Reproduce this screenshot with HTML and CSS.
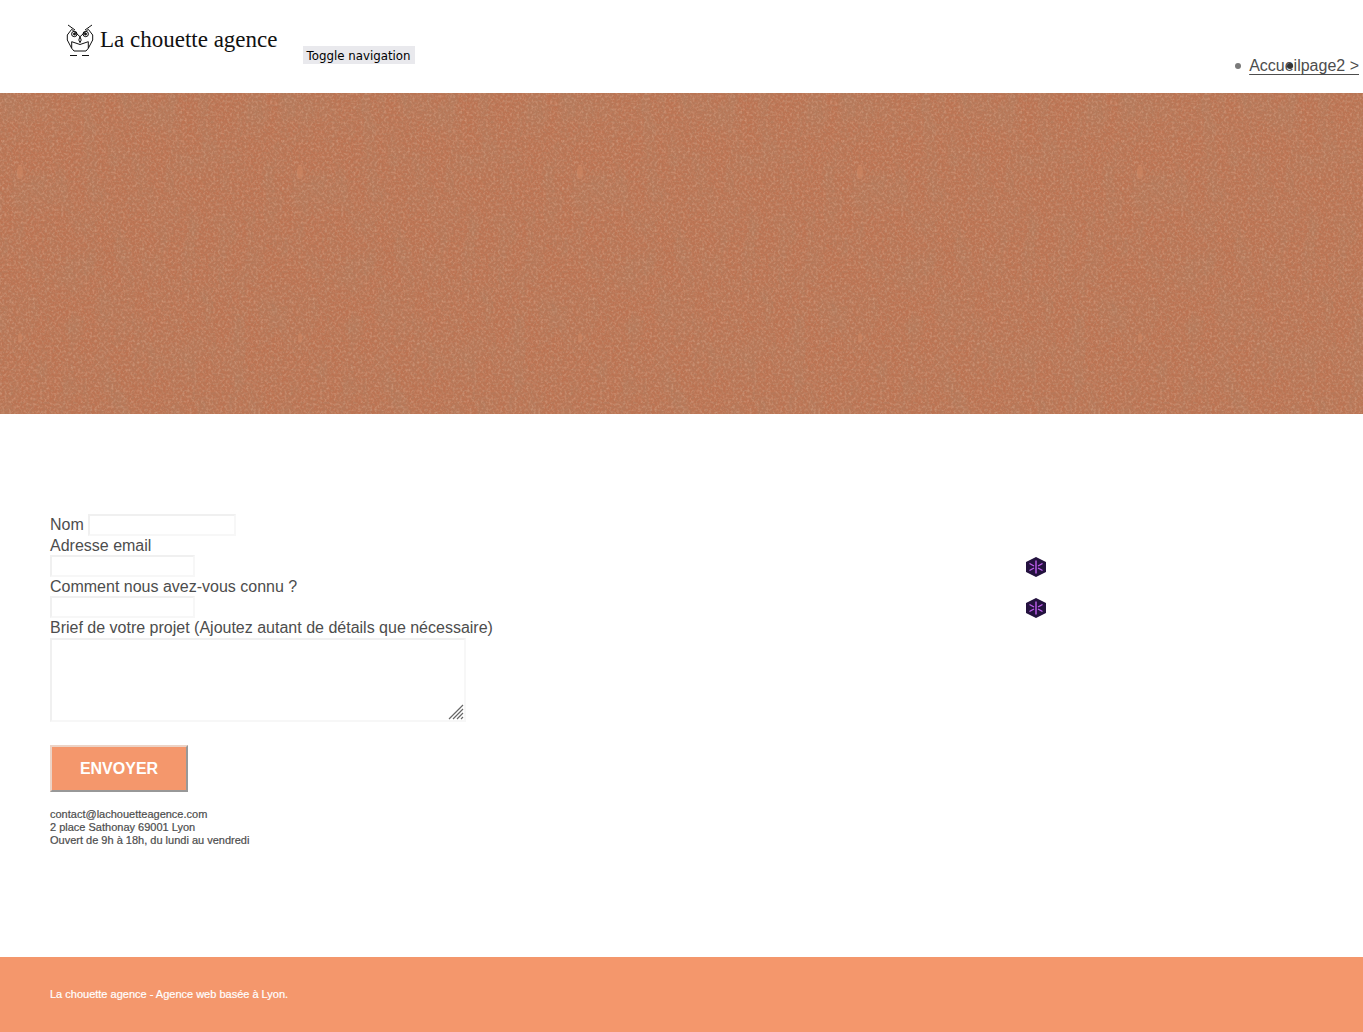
FILE: index.html
```html
<!DOCTYPE html>
<html lang="fr">
<head>
<meta charset="utf-8">
<title>La chouette agence</title>
<link rel="stylesheet" href="styles.css">
</head>
<body>
<header class="site-header">
  <a class="logo" href="#">
    <svg class="owl" width="28" height="34" viewBox="0 0 28 34" fill="none" stroke="#111" stroke-width="1">
      <path d="M2 1 L9 6 M26 1 L19 6"/>
      <path d="M5.700 5.300 L1.300 11 V16 L5.700 24.300 L8 27 H20 L22.300 24.300 L26.700 16 V11 L22.300 5.300"/>
      <path d="M5.700 5.300 L14 12.700 L22.300 5.300"/>
      <circle cx="8.300" cy="10" r="2.700"/>
      <circle cx="19.700" cy="10" r="2.700"/>
      <circle cx="8.500" cy="10" r="1" fill="#111"/>
      <circle cx="19.500" cy="10" r="1" fill="#111"/>
      <path d="M14 12.700 L12.800 16 L14 18.700 L15.200 16 Z"/>
      <path d="M5.700 17.700 V24.300 M22.300 17.700 V24.300 M5.700 17.700 L14 20.500 L22.300 17.700"/>
      <path d="M4 31.500 H11 M16 31.500 H23"/>
    </svg>
    <span class="logo-text">La chouette agence</span>
  </a>
  <button class="toggle" type="button">Toggle navigation</button>
  <ul class="nav">
    <li><a href="#">Accueil</a></li>
    <li><a href="#">page2 &gt;</a></li>
  </ul>
</header>

<div class="banner" role="presentation">
  <svg class="texture" width="100%" height="100%" aria-hidden="true">
    <defs>
      <filter id="grain-dark" x="0" y="0" width="100%" height="100%">
        <feTurbulence type="fractalNoise" baseFrequency="0.38 0.42" numOctaves="2" seed="8" stitchTiles="stitch"/>
        <feColorMatrix type="matrix" values="0 0 0 0 0.42  0 0 0 0 0.22  0 0 0 0 0.13  1 0 0 0 -0.38"/>
      </filter>
      <filter id="grain-light" x="0" y="0" width="100%" height="100%">
        <feTurbulence type="fractalNoise" baseFrequency="0.42 0.38" numOctaves="2" seed="21" stitchTiles="stitch"/>
        <feColorMatrix type="matrix" values="0 0 0 0 0.84  0 0 0 0 0.52  0 0 0 0 0.37  0.9 0 0 0 -0.4"/>
      </filter>
      <filter id="blotch" x="0" y="0" width="100%" height="100%">
        <feTurbulence type="fractalNoise" baseFrequency="0.06 0.025" numOctaves="3" seed="5" stitchTiles="stitch"/>
        <feColorMatrix type="matrix" values="0 0 0 0 0.42  0 0 0 0 0.22  0 0 0 0 0.13  0.9 0 0 0 -0.34"/>
      </filter>
      <pattern id="weave" width="280" height="321" patternUnits="userSpaceOnUse">
        <rect width="280" height="321" filter="url(#blotch)"/>
        <rect width="280" height="321" filter="url(#grain-dark)"/>
        <rect width="280" height="321" filter="url(#grain-light)"/>
        <ellipse class="fleck" cx="20" cy="79" rx="3" ry="7"/>
        <ellipse class="fleck" cx="20" cy="245" rx="2" ry="5"/>
      </pattern>
    </defs>
    <rect width="100%" height="100%" fill="url(#weave)"/>
  </svg>
</div>

<main class="content">
  <form class="contact-form">
    <div class="name-row">
      <label for="nom">Nom</label>
      <input id="nom" class="input-name" type="text">
    </div>
    <label class="field-label" for="email">Adresse email</label>
    <input id="email" class="input-short" type="text">
    <label class="field-label" for="source">Comment nous avez-vous connu ?</label>
    <input id="source" class="input-short" type="text">
    <label class="field-label brief-label" for="brief">Brief de votre projet (Ajoutez autant de détails que nécessaire)</label>
    <div class="brief-box">
      <textarea id="brief"></textarea>
      <svg class="grip" width="16" height="16" viewBox="0 0 16 16" aria-hidden="true">
        <path d="M1 15 L15 1 M5 15 L15 5 M9 15 L15 9 M13 15 L15 13"/>
      </svg>
    </div>
    <button class="send" type="button">ENVOYER</button>
    <p class="address">contact@lachouetteagence.com<br>2 place Sathonay 69001 Lyon<br>Ouvert de 9h à 18h, du lundi au vendredi</p>
  </form>
  <aside class="badges">
    <svg class="badge" width="20" height="20" viewBox="0 0 20 20"><path class="hex" d="M10 0 L20 5 V15 L10 20 L0 15 V5 Z"/><path class="spark" d="M10 3.500 V16.500 M3.500 6.500 L8 9 M3.500 13.500 L8 11 M16.500 6.500 L12 9 M16.500 13.500 L12 11"/></svg>
    <svg class="badge" width="20" height="20" viewBox="0 0 20 20"><path class="hex" d="M10 0 L20 5 V15 L10 20 L0 15 V5 Z"/><path class="spark" d="M10 3.500 V16.500 M3.500 6.500 L8 9 M3.500 13.500 L8 11 M16.500 6.500 L12 9 M16.500 13.500 L12 11"/></svg>
  </aside>
</main>

<footer class="site-footer">La chouette agence - Agence web basée à Lyon.</footer>
</body>
</html>
```
FILE: styles.css
```css
* { box-sizing: border-box; }
html, body { margin: 0; padding: 0; }
body {
  font-family: "Liberation Sans", Arial, sans-serif;
  font-size: 16px;
  color: #4d4d4d;
  background: #fff;
}
.site-header {
  height: 93px;
  display: flex;
  align-items: flex-start;
  padding-left: 66px;
  padding-right: 4px;
}
.logo {
  display: flex;
  align-items: flex-start;
  margin-top: 24px;
  color: #111;
  text-decoration: none;
}
.owl { display: block; }
.logo-text {
  font-family: "Liberation Serif", serif;
  font-size: 23px;
  line-height: 30px;
  margin: 1px 0 0 6px;
  white-space: nowrap;
}
.toggle {
  margin: 46px 0 0 25px;
  width: 112px;
  height: 18px;
  padding: 2px 0 0;
  border: 0;
  background: #e9e9ed;
  color: #000;
  font-family: "DejaVu Sans", sans-serif;
  font-size: 11.800px;
  line-height: 16px;
}
.nav {
  list-style: none;
  display: flex;
  margin: 56px 0 0 auto;
  padding: 0;
}
.nav li { position: relative; line-height: 20px; }
.nav li::before {
  content: "";
  position: absolute;
  left: -14px;
  top: 7px;
  width: 6px;
  height: 6px;
  border-radius: 50%;
  background: #7a7a7a;
}
.nav li + li::before { background: #333; }
.nav a { color: #4d4d4d; text-underline-offset: 3px; }
.banner {
  height: 321px;
  background: #bc7352;
  overflow: hidden;
}
.texture { display: block; }
.fleck { fill: #cf8763; opacity: 0.6; }
.content {
  height: 543px;
  padding: 100px 0 0 50px;
  display: flex;
}
.contact-form { width: 976px; flex: none; }
.name-row {
  display: flex;
  align-items: center;
  gap: 4px;
  height: 22px;
}
.field-label {
  display: block;
  height: 19px;
  line-height: 19px;
}
.brief-label { height: 20px; }
input, textarea {
  display: block;
  border: 2px solid;
  border-color: #f0f0f0 #f7f7f7 #f7f7f7 #f0f0f0;
  background: #fff;
  padding: 0;
  margin: 0;
  font: inherit;
}
.input-name { width: 148px; height: 22px; }
.input-short { width: 145px; height: 22px; }
.brief-box { position: relative; width: 416px; height: 84px; }
textarea { width: 416px; height: 84px; resize: none; }
.grip { position: absolute; right: 2px; bottom: 2px; }
.grip path { stroke: #666; stroke-width: 1.2; fill: none; }
.send {
  display: block;
  margin-top: 23px;
  width: 138px;
  height: 47px;
  padding: 0;
  background: #f4976c;
  border: 2px solid;
  border-color: #ecd3c6 #989898 #989898 #ecd3c6;
  color: #fff;
  font-family: inherit;
  font-size: 16px;
  font-weight: 700;
}
.address {
  margin: 16px 0 0;
  font-size: 11px;
  line-height: 13px;
  -webkit-text-stroke: 0.2px #4d4d4d;
}
.badges {
  display: flex;
  flex-direction: column;
  gap: 21px;
  margin-top: 43px;
}
.badge { display: block; }
.hex { fill: #24123f; }
.spark { stroke: #c060f0; stroke-width: 1.4; fill: none; }
.site-footer {
  height: 75px;
  padding-left: 50px;
  background: #f4976c;
  color: #fff;
  font-size: 11px;
  line-height: 75px;
  -webkit-text-stroke: 0.2px #fff;
}
```
